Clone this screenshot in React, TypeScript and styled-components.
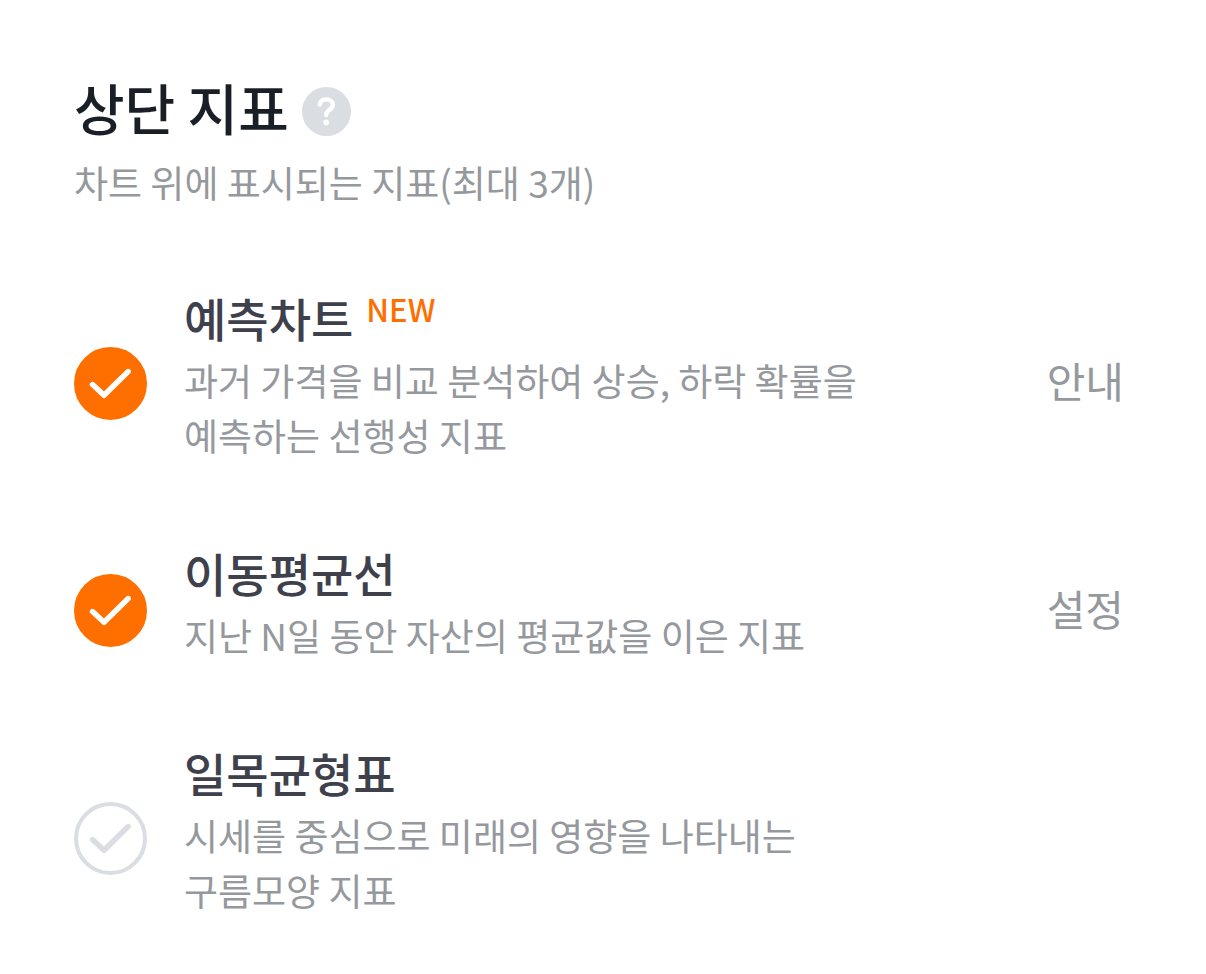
import React from "react";
import styled, { createGlobalStyle } from "styled-components";

const GlobalStyle = createGlobalStyle`
  * { box-sizing: border-box; }
  body {
    margin: 0;
    background: #ffffff;
    font-family: "Noto Sans CJK KR", "Noto Sans", sans-serif;
    color: #95999e;
  }
  h2, h3, p, ul { margin: 0; padding: 0; }
`;

const Panel = styled.main`
  padding: 68px 82px 40px 74px;
`;

const TitleRow = styled.div`
  display: flex;
  align-items: center;
  gap: 13px;
  margin-bottom: 11px;
`;

const Title = styled.h2`
  font-size: 55px;
  line-height: 76px;
  font-weight: 500;
  color: #1a1e27;
`;

const HelpButton = styled.button`
  display: block;
  width: 49px;
  height: 49px;
  margin-top: 10px;
  padding: 0;
  border: 0;
  background: none;
  cursor: pointer;

  svg { display: block; }
`;

const Description = styled.p`
  font-size: 37px;
  line-height: 55px;
  color: #95999e;
`;

const List = styled.ul`
  display: flex;
  flex-direction: column;
  gap: 59px;
  margin-top: 75px;
  list-style: none;
`;

const Row = styled.li`
  display: flex;
  align-items: center;
  gap: 37px;
`;

const CheckWrap = styled.span`
  display: grid;
  flex: none;
  width: 73px;
  height: 73px;

  > * { grid-area: 1 / 1; }
  svg { pointer-events: none; }
`;

const CheckInput = styled.input`
  width: 73px;
  height: 73px;
  margin: 0;
  appearance: none;
  border: 4px solid #dadde2;
  border-radius: 50%;
  background: #ffffff;
  cursor: pointer;

  & + svg { color: #dadde2; }

  &:checked {
    border-color: #ff6f00;
    background: #ff6f00;
  }

  &:checked + svg { color: #ffffff; }
`;

const Body = styled.div`
  flex: 1;
  max-width: 690px;
  padding-bottom: 18px;
`;

const NameRow = styled.div`
  display: flex;
  align-items: flex-start;
  gap: 13px;
  margin-bottom: 4px;
`;

const Name = styled.h3`
  font-size: 46px;
  line-height: 64px;
  font-weight: 500;
  color: #3e414c;
`;

const NewTag = styled.span`
  font-size: 31px;
  line-height: 48px;
  font-weight: 500;
  color: #ff6f00;
`;

const LinkButton = styled.button`
  margin-left: auto;
  padding: 0 0 6px;
  border: 0;
  background: none;
  font: inherit;
  font-size: 42px;
  line-height: 60px;
  color: #95999e;
  cursor: pointer;
`;

interface Indicator {
  id: string;
  name: string;
  lines: string[];
  checked: boolean;
  isNew?: boolean;
  action?: string;
}

const indicators: Indicator[] = [
  {
    id: "forecast",
    name: "예측차트",
    lines: ["과거 가격을 비교 분석하여 상승, 하락 확률을", "예측하는 선행성 지표"],
    checked: true,
    isNew: true,
    action: "안내",
  },
  {
    id: "moving-average",
    name: "이동평균선",
    lines: ["지난 N일 동안 자산의 평균값을 이은 지표"],
    checked: true,
    action: "설정",
  },
  {
    id: "ichimoku",
    name: "일목균형표",
    lines: ["시세를 중심으로 미래의 영향을 나타내는", "구름모양 지표"],
    checked: false,
  },
];

function IndicatorRow({ item }: { item: Indicator }) {
  return (
    <Row>
      <CheckWrap>
        <CheckInput type="checkbox" id={item.id} defaultChecked={item.checked} />
        <svg width="73" height="73" viewBox="0 0 73 73" fill="none" aria-hidden="true">
          <path d="M18.5 37.5 L30 48.3 L54.2 24.5" stroke="currentColor" strokeWidth="5.4" strokeLinecap="round" strokeLinejoin="round" />
        </svg>
      </CheckWrap>
      <Body>
        <NameRow>
          <Name>
            <label htmlFor={item.id}>{item.name}</label>
          </Name>
          {item.isNew && <NewTag>NEW</NewTag>}
        </NameRow>
        {item.lines.map((line) => (
          <Description key={line}>{line}</Description>
        ))}
      </Body>
      {item.action && <LinkButton type="button">{item.action}</LinkButton>}
    </Row>
  );
}

export default function App() {
  return (
    <>
      <GlobalStyle />
      <Panel>
        <TitleRow>
          <Title>상단 지표</Title>
          <HelpButton type="button" aria-label="도움말">
            <svg width="49" height="49" viewBox="0 0 49 49" fill="none">
              <circle cx="24.5" cy="24.5" r="24.5" fill="#dadde2" />
              <path d="M17.8 17.4 C18.4 14 21 12.4 24.3 12.4 C28.2 12.4 30.8 14.6 30.8 18 C30.8 22.8 24.2 22.6 24.2 28" stroke="#ffffff" strokeWidth="4.4" strokeLinecap="round" />
              <circle cx="24.2" cy="35.4" r="2.8" fill="#ffffff" />
            </svg>
          </HelpButton>
        </TitleRow>
        <Description>차트 위에 표시되는 지표(최대 3개)</Description>
        <List>
          {indicators.map((item) => (
            <IndicatorRow key={item.id} item={item} />
          ))}
        </List>
      </Panel>
    </>
  );
}
